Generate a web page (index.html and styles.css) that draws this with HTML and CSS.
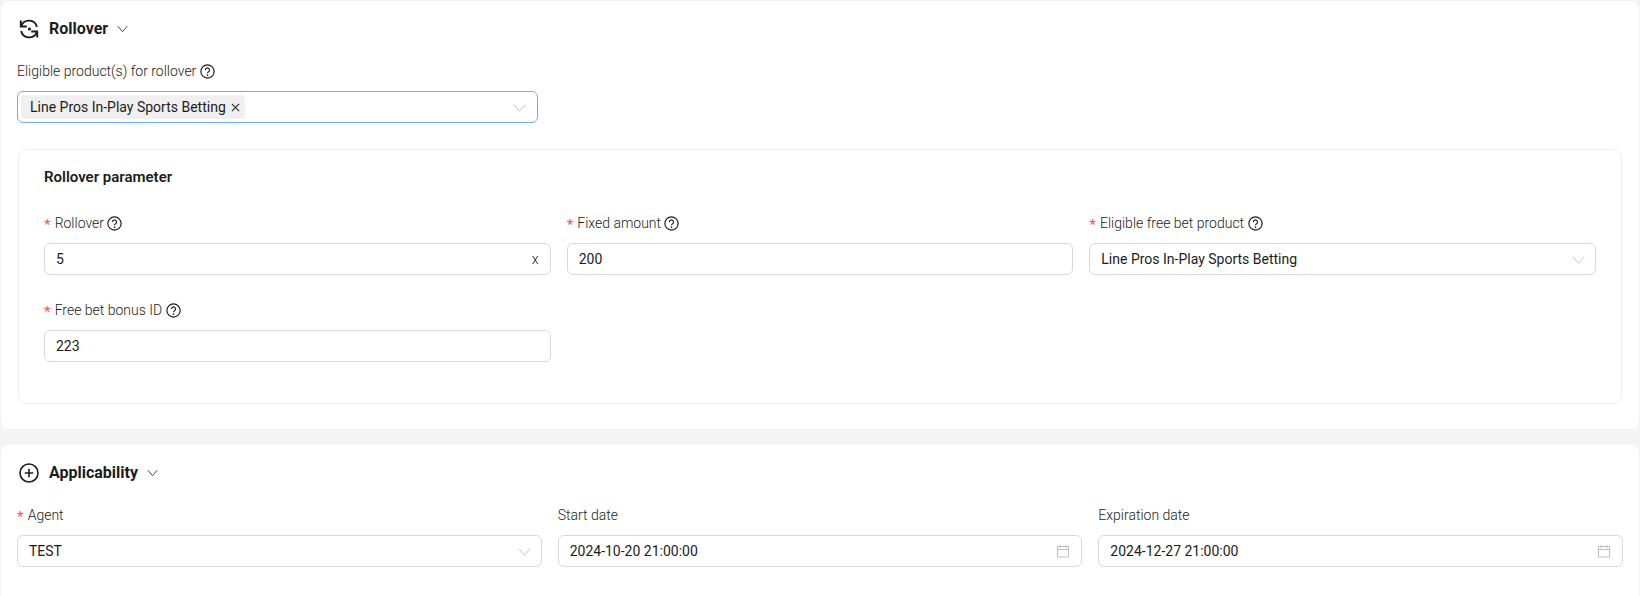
FILE: index.html
```html
<!DOCTYPE html>
<html lang="en">
<head>
<meta charset="utf-8">
<title>Rollover</title>
<link rel="stylesheet" href="styles.css">
</head>
<body>
<svg class="defs" width="0" height="0" aria-hidden="true">
  <symbol id="help" viewBox="0 0 14 14"><circle cx="7" cy="7" r="6.200" fill="none" stroke="currentColor" stroke-width="1.100"/><path d="M5.100 5.600a1.900 1.900 0 1 1 2.900 1.600c-.7.4-1 .8-1 1.500" fill="none" stroke="currentColor" stroke-width="1.100"/><circle cx="7" cy="10.400" r=".75" fill="currentColor"/></symbol>
  <symbol id="chev" viewBox="0 0 14 14"><path d="M1 4l6 7 6-7" fill="none" stroke="currentColor" stroke-width="1"/></symbol>
  <symbol id="cal" viewBox="0 0 14 14"><path d="M1.500 2.500h11v10.500h-11zM1.500 5.500h11M4 1v3M10 1v3" fill="none" stroke="currentColor" stroke-width="1"/></symbol>
</svg>

<section class="panel first">
  <header class="panel-head">
    <svg class="head-icon" viewBox="0 0 20 20"><path d="M2.200 7A8.200 8.200 0 0 1 17.900 8M17.800 13A8.200 8.200 0 0 1 2.100 12" fill="none" stroke="currentColor" stroke-width="1.900"/><path d="M1.800 1.500v6h6M18.200 18.500v-6h-6" fill="none" stroke="currentColor" stroke-width="1.900"/><circle cx="10.500" cy="10" r="1.600" fill="currentColor"/></svg>
    <h2>Rollover</h2>
    <svg class="head-chev"><use href="#chev"/></svg>
  </header>
  <div class="label top-label">Eligible product(s) for rollover <svg class="help"><use href="#help"/></svg></div>
  <div class="field focus">
    <span class="tag">Line Pros In-Play Sports Betting <svg class="tag-x" viewBox="0 0 8 8"><path d="M.8.800l6.400 6.400M7.200.800L.8 7.200" stroke="currentColor" stroke-width="1.100"/></svg></span>
    <svg class="arrow"><use href="#chev"/></svg>
  </div>

  <div class="card">
    <h3>Rollover parameter</h3>
    <div class="grid params">
      <div class="item">
        <div class="label"><span class="req">*</span>Rollover <svg class="help"><use href="#help"/></svg></div>
        <div class="field"><span class="value">5</span><span class="suffix">x</span></div>
      </div>
      <div class="item">
        <div class="label"><span class="req">*</span>Fixed amount <svg class="help"><use href="#help"/></svg></div>
        <div class="field"><span class="value">200</span></div>
      </div>
      <div class="item">
        <div class="label"><span class="req">*</span>Eligible free bet product <svg class="help"><use href="#help"/></svg></div>
        <div class="field"><span class="value">Line Pros In-Play Sports Betting</span><svg class="arrow"><use href="#chev"/></svg></div>
      </div>
      <div class="item">
        <div class="label"><span class="req">*</span>Free bet bonus ID <svg class="help"><use href="#help"/></svg></div>
        <div class="field"><span class="value">223</span></div>
      </div>
    </div>
  </div>
</section>

<section class="panel second">
  <header class="panel-head">
    <svg class="head-icon" viewBox="0 0 20 20"><circle cx="10" cy="10" r="9" fill="none" stroke="currentColor" stroke-width="1.600"/><path d="M10 5.800v8.400M5.800 10h8.400" stroke="currentColor" stroke-width="1.600"/></svg>
    <h2>Applicability</h2>
    <svg class="head-chev"><use href="#chev"/></svg>
  </header>
  <div class="grid apply">
    <div class="item shifted">
      <div class="label"><span class="req">*</span>Agent</div>
      <div class="field"><span class="value">TEST</span><svg class="arrow"><use href="#chev"/></svg></div>
    </div>
    <div class="item">
      <div class="label">Start date</div>
      <div class="field"><span class="value">2024-10-20 21:00:00</span><svg class="cal"><use href="#cal"/></svg></div>
    </div>
    <div class="item">
      <div class="label">Expiration date</div>
      <div class="field"><span class="value">2024-12-27 21:00:00</span><svg class="cal"><use href="#cal"/></svg></div>
    </div>
  </div>
</section>
</body>
</html>
```
FILE: styles.css
```css
* { box-sizing: border-box; }
html, body { margin: 0; height: 596px; overflow: hidden; }
body {
  background: #f4f4f4;
  padding: 1px 1px 0;
  font-family: Roboto, "Liberation Sans", sans-serif;
  font-size: 14px;
  color: #1c1c1c;
}
.defs { position: absolute; }
.panel {
  background: #fff;
  border-radius: 8px;
  padding: 18px 16px 26px;
}
.first { height: 428px; margin-bottom: 16px; }
.second { height: 160px; border-radius: 8px 8px 0 0; }
.panel-head { display: flex; align-items: center; height: 20px; }
.head-icon { width: 20px; height: 20px; margin-left: 2px; color: #1c1c1c; flex: none; }
.panel-head h2 { margin: 0 0 0 10px; font-size: 16px; font-weight: 700; line-height: 20px; }
.head-chev { width: 11px; height: 11px; margin-left: 9px; margin-bottom: 1px; color: #1c1c1c; }
.label {
  display: flex;
  align-items: center;
  height: 22px;
  font-weight: 300;
  line-height: 22px;
  white-space: pre;
}
.top-label { margin-top: 21px; margin-bottom: 9px; }
.req {
  color: #ff4d4f;
  margin-right: 4px;
  padding-top: 6px;
  font-size: 17px;
  font-family: "Liberation Sans", sans-serif;
}
.help { width: 15px; height: 15px; margin-top: 1px; color: #1c1c1c; flex: none; }
.field {
  position: relative;
  display: flex;
  align-items: center;
  height: 32px;
  padding: 0 11px 1px;
  border: 1px solid #d9d9d9;
  border-radius: 6px;
  background: #fff;
}
.field.focus { border-color: #69b1e8; padding: 0 3px; width: 521px; }
.tag {
  display: inline-flex;
  align-items: center;
  height: 24px;
  padding: 0 5px 0 9px;
  border-radius: 4px;
  background: #f0f0f0;
  white-space: pre;
}
.tag-x { width: 9px; height: 9px; margin-left: 2px; color: #333; }
.arrow { position: absolute; right: 10px; top: 9px; width: 13px; height: 13px; color: #bfbfbf; }
.focus .arrow { right: 11px; }
.cal { position: absolute; right: 11px; top: 8px; width: 14px; height: 14px; color: #bfbfbf; }
.suffix { margin-left: auto; font-size: 14px; font-weight: 300; }
.card {
  margin: 26px 0 0 1px;
  width: 1604px;
  height: 255px;
  padding: 16px 25px;
  border: 1px solid #f0f0f0;
  border-radius: 8px;
}
.card h3 { margin: 0; font-size: 15px; font-weight: 600; line-height: 22px; }
.grid { display: grid; grid-template-columns: repeat(3, 1fr); column-gap: 16px; }
.params { margin-top: 24px; row-gap: 24px; }
.params .label { margin-bottom: 9px; }
.apply { margin-top: 21px; }
.apply .label { margin-bottom: 9px; }
.shifted .field { margin-top: 1px; }
```
